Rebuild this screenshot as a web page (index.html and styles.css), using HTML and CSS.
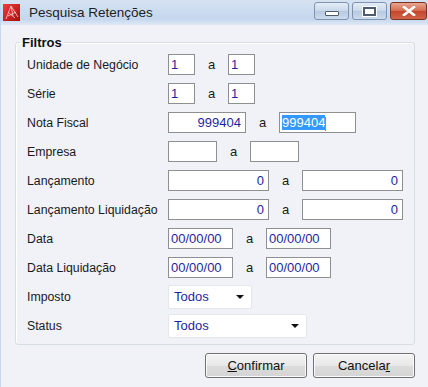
FILE: index.html
```html
<!DOCTYPE html>
<html lang="pt">
<head>
    <meta charset="UTF-8">
    <title>Pesquisa Retenções</title>
    <link rel="stylesheet" href="styles.css">
</head>
<body>

<div class="window">
    <div class="titlebar">
        <svg class="app-icon" width="17" height="17" viewBox="0 0 17 17">
            <defs>
                <linearGradient id="ig" x1="0" y1="0" x2="1" y2="1">
                    <stop offset="0" stop-color="#f23b3b"/>
                    <stop offset="1" stop-color="#a80d0d"/>
                </linearGradient>
            </defs>
            <rect width="17" height="17" fill="url(#ig)"/>
            <path d="M3 15 L8 2 L15 13 M6 9 L12 14 M8 2 L10 12 M5 12 L13 8" stroke="#ffd0d0" stroke-width="1" fill="none" opacity="0.8"/>
        </svg>
        <span class="title">Pesquisa Retenções</span>
        <div class="caption-buttons">
            <div class="cap-btn"><span class="ico-min"></span></div>
            <div class="cap-btn"><span class="ico-max"></span></div>
            <div class="cap-btn close">
                <svg width="14" height="10" viewBox="0 0 14 10">
                    <path d="M2 1 L12 9 M12 1 L2 9" stroke="#fff" stroke-width="2.6" stroke-linecap="square"/>
                </svg>
            </div>
        </div>
    </div>

    <div class="content">
        <fieldset class="group">
            <legend>Filtros</legend>

            <div class="row">
                <label>Unidade de Negócio</label>
                <div class="field w27">1</div>
                <span class="sep">a</span>
                <div class="field w27">1</div>
            </div>
            <div class="row">
                <label>Série</label>
                <div class="field w27">1</div>
                <span class="sep">a</span>
                <div class="field w27">1</div>
            </div>
            <div class="row">
                <label>Nota Fiscal</label>
                <div class="field w78 right">999404</div>
                <span class="sep">a</span>
                <div class="field w77"><span class="selected">999404</span><span class="caret"></span></div>
            </div>
            <div class="row">
                <label>Empresa</label>
                <div class="field w49"></div>
                <span class="sep">a</span>
                <div class="field w49"></div>
            </div>
            <div class="row">
                <label>Lançamento</label>
                <div class="field w101 right">0</div>
                <span class="sep">a</span>
                <div class="field w101 right">0</div>
            </div>
            <div class="row">
                <label>Lançamento Liquidação</label>
                <div class="field w101 right">0</div>
                <span class="sep">a</span>
                <div class="field w101 right">0</div>
            </div>
            <div class="row">
                <label>Data</label>
                <div class="field w65">00/00/00</div>
                <span class="sep">a</span>
                <div class="field w65">00/00/00</div>
            </div>
            <div class="row">
                <label>Data Liquidação</label>
                <div class="field w65">00/00/00</div>
                <span class="sep">a</span>
                <div class="field w65">00/00/00</div>
            </div>
            <div class="row">
                <label>Imposto</label>
                <div class="combo w84">Todos<span class="arrow"></span></div>
            </div>
            <div class="row">
                <label>Status</label>
                <div class="combo w139">Todos<span class="arrow"></span></div>
            </div>
        </fieldset>

        <div class="buttons">
            <button><u>C</u>onfirmar</button>
            <button>Cancela<u>r</u></button>
        </div>
    </div>
</div>

</body>
</html>
```

FILE: styles.css
```css
body {
    margin: 0;
    font-family: "Liberation Sans", Arial, sans-serif;
    font-size: 13px;
    color: #1a1a1a;
}
.window {
    width: 428px;
    height: 387px;
    background-color: #f1f2f8;
    border-left: 1px solid #c6d9ef;
    box-sizing: border-box;
}
.titlebar {
    height: 25px;
    display: flex;
    align-items: center;
    background: linear-gradient(#d5e2f2, #c5d7ee 80%, #dae6f4);
    border-bottom: 1px solid #dde6f1;
    box-sizing: border-box;
}
.app-icon {
    margin-left: 2px;
    margin-right: 9px;
}
.title {
    font-size: 13.5px;
    color: #1e1e1e;
    flex: 1;
}
.caption-buttons {
    display: flex;
    align-self: flex-start;
    margin-top: 2px;
    gap: 3px;
    margin-right: 1px;
}
.cap-btn {
    width: 35px;
    height: 18px;
    border: 1px solid #8193ad;
    border-radius: 3px;
    background: linear-gradient(#e4edf8, #c9d8ea 50%, #b6c9e0 51%, #cbdbee);
    display: flex;
    align-items: center;
    justify-content: center;
    box-sizing: border-box;
}
.cap-btn.close {
    width: 37px;
    border-color: #7b3323;
    background: linear-gradient(#e9a690, #d4694e 50%, #c3452a 51%, #d0654a);
}
.ico-min {
    width: 12px;
    height: 3px;
    background: #fff;
    border: 1px solid #505c6c;
    border-radius: 1px;
    margin-top: 4px;
}
.ico-max {
    width: 9px;
    height: 5px;
    border: 2px solid #505c6c;
    background: #fff;
    outline: 1px solid #fff;
}
.content {
    padding-top: 10px;
}
.group {
    margin: 0 13px 0 14px;
    padding: 0 0 4px 11px;
    border: 1px solid #d7dde4;
    border-radius: 3px;
    box-shadow: 1px 1px 0 #ffffff inset;
}
legend {
    font-weight: bold;
    font-size: 13px;
    line-height: 15px;
    padding: 0 2px;
    margin-left: -7px;
    color: #111;
}
.row {
    display: flex;
    align-items: center;
    height: 29px;
}
label {
    width: 141px;
    flex-shrink: 0;
    font-size: 12.3px;
}
.field {
    height: 21px;
    line-height: 19px;
    border: 1px solid #8e8f91;
    background: #ffffff;
    color: #1f1fa0;
    padding: 0 2px;
    box-sizing: border-box;
    white-space: nowrap;
    overflow: hidden;
}
.field.right {
    text-align: right;
    padding-right: 4px;
}
.selected {
    background: #3399ff;
    color: #ffffff;
}
.caret {
    display: inline-block;
    width: 1px;
    height: 14px;
    background: #e07a1a;
    vertical-align: middle;
}
.sep {
    width: 33px;
    text-align: center;
    flex-shrink: 0;
}
.w27 { width: 27px; }
.w49 { width: 49px; }
.w65 { width: 65px; }
.w77 { width: 77px; }
.w78 { width: 78px; }
.w101 { width: 101px; }
.w84 { width: 84px; }
.w139 { width: 139px; }
.combo {
    height: 24px;
    line-height: 22px;
    border: 1px solid #e6e7ea;
    border-radius: 2px;
    background: #ffffff;
    color: #1f1fa0;
    padding-left: 5px;
    box-sizing: border-box;
    display: flex;
    justify-content: space-between;
    align-items: center;
}
.arrow {
    width: 0;
    height: 0;
    border-left: 4px solid transparent;
    border-right: 4px solid transparent;
    border-top: 4px solid #111;
    margin-right: 7px;
}
.buttons {
    display: flex;
    justify-content: flex-end;
    gap: 6px;
    padding-right: 13px;
    margin-top: 8px;
}
button {
    width: 102px;
    height: 25px;
    font-family: "Liberation Sans", Arial, sans-serif;
    font-size: 13px;
    color: #111;
    border: 1px solid #707070;
    border-radius: 3px;
    background: linear-gradient(#f4f4f4, #e8e8e8 50%, #dcdcdc 51%, #d4d4d4);
    box-shadow: inset 0 0 0 1px #fbfbfb;
    padding: 0;
}
```
